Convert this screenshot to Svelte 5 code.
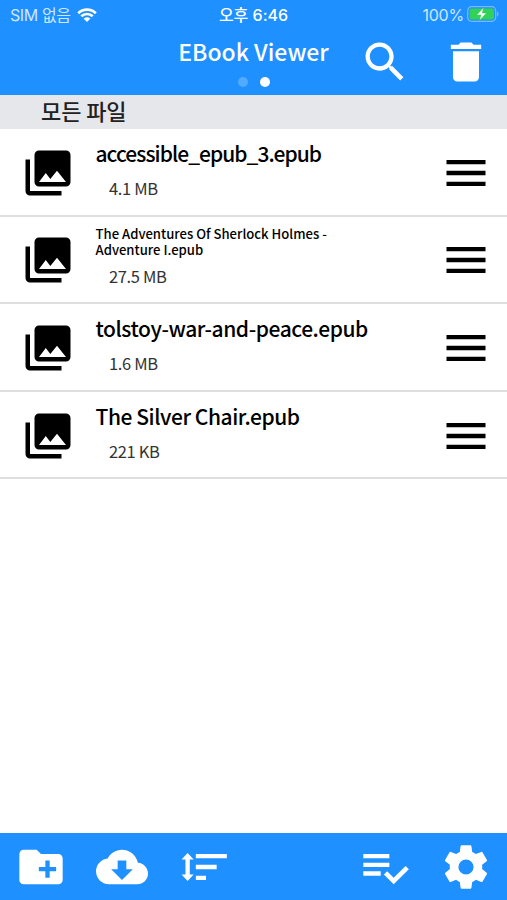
<script>
  // ── Files in the current folder ──
  const files = [
    { name: 'accessible_epub_3.epub', size: '4.1 MB', tight: true },
    { name: 'The Adventures Of Sherlock Holmes - Adventure I.epub', size: '27.5 MB', long: true },
    { name: 'tolstoy-war-and-peace.epub', size: '1.6 MB' },
    { name: 'The Silver Chair.epub', size: '221 KB' },
  ];

  // ── Icon paths, 24x24 grid ──
  const icons = {
    search: 'M15.5 14h-.79l-.28-.27C15.41 12.59 16 11.11 16 9.5 16 5.91 13.09 3 9.5 3S3 5.91 3 9.5 5.91 16 9.5 16c1.61 0 3.09-.59 4.23-1.57l.27.28v.79l5 4.99L20.49 19l-4.99-5zm-6 0C7.01 14 5 11.99 5 9.5S7.01 5 9.5 5 14 7.01 14 9.5 11.99 14 9.5 14z',
    trash: 'M6 19c0 1.1.9 2 2 2h8c1.1 0 2-.9 2-2V7H6v12zM19 4h-3.5l-1-1h-5l-1 1H5v2h14V4z',
    book: 'M22,16V4A2,2 0 0,0 20,2H8A2,2 0 0,0 6,4V16A2,2 0 0,0 8,18H20A2,2 0 0,0 22,16M11,12L13.03,14.71L16,11L20,16H8M2,6V20A2,2 0 0,0 4,22H18V20H4V6',
    menu: 'M3 6h18v2H3zM3 11h18v2H3zM3 16h18v2H3z',
    newFolder: 'M20 6h-8l-2-2H4c-1.11 0-1.99.89-1.99 2L2 18c0 1.11.89 2 2 2h16c1.11 0 2-.89 2-2V8c0-1.11-.89-2-2-2zm-1 8h-3v3h-2v-3h-3v-2h3V9h2v3h3v2z',
    download: 'M19.35 10.04C18.67 6.59 15.64 4 12 4 9.11 4 6.6 5.64 5.35 8.04 2.34 8.36 0 10.91 0 14c0 3.31 2.69 6 6 6h13c2.76 0 5-2.24 5-5 0-2.64-2.05-4.78-4.65-4.96zM17 13l-5 5-5-5h3V9h4v4h3z',
    sort: 'M4.9 5.5L7.7 8.5H5.9V15.5H7.7L4.9 18.5L2.1 15.5H3.9V8.5H2.1zM8.7 6h14.3v2H8.7zM8.7 11h9.6v2H8.7zM8.7 16h4.7v2H8.7z',
    select: 'M14,10H2V12H14V10M14,6H2V8H14V6M2,16H10V14H2V16M21.5,11.5L23,13L16,20L11.5,15.5L13,14L16,17L21.5,11.5Z',
    settings: 'M12,15.5A3.5,3.5 0 0,1 8.5,12A3.5,3.5 0 0,1 12,8.5A3.5,3.5 0 0,1 15.5,12A3.5,3.5 0 0,1 12,15.5M19.43,12.97C19.47,12.65 19.5,12.33 19.5,12C19.5,11.67 19.47,11.34 19.43,11L21.54,9.37C21.73,9.22 21.78,8.95 21.66,8.73L19.66,5.27C19.54,5.05 19.27,4.96 19.05,5.05L16.56,6.05C16.04,5.66 15.5,5.32 14.87,5.07L14.5,2.42C14.46,2.18 14.25,2 14,2H10C9.75,2 9.54,2.18 9.5,2.42L9.13,5.07C8.5,5.32 7.96,5.66 7.44,6.05L4.95,5.05C4.73,4.96 4.46,5.05 4.34,5.27L2.34,8.73C2.21,8.95 2.27,9.22 2.46,9.37L4.57,11C4.53,11.34 4.5,11.67 4.5,12C4.5,12.33 4.53,12.65 4.57,12.97L2.46,14.63C2.27,14.78 2.21,15.05 2.34,15.27L4.34,18.73C4.46,18.95 4.73,19.03 4.95,18.95L7.44,17.94C7.96,18.34 8.5,18.68 9.13,18.93L9.5,21.58C9.54,21.82 9.75,22 10,22H14C14.25,22 14.46,21.82 14.5,21.58L14.87,18.93C15.5,18.67 16.04,18.34 16.56,17.94L19.05,18.95C19.27,19.03 19.54,18.95 19.66,18.73L21.66,15.27C21.78,15.05 21.73,14.78 21.54,14.63L19.43,12.97Z',
  };
</script>

{#snippet icon(name)}
  <svg class="icon" viewBox="0 0 24 24"><path d={icons[name]} /></svg>
{/snippet}

<div class="app">
  <header>
    <div class="status">
      <div class="status-left">
        <span class="carrier">SIM 없음</span>
        <svg class="wifi" viewBox="0 0 20 14">
          <path d="M1.2 5.2A12.6 12.6 0 0 1 18.8 5.2" />
          <path d="M4.3 8.3A8.2 8.2 0 0 1 15.7 8.3" />
          <path class="wifi-dot" d="M10 14L6.7 10.7A4.7 4.7 0 0 1 13.3 10.7z" />
        </svg>
      </div>
      <span class="time">오후 6:46</span>
      <div class="status-right">
        <span class="percent">100%</span>
        <svg class="battery" viewBox="0 0 32 16">
          <rect class="battery-shell" x=".7" y=".7" width="28" height="14.6" rx="4" />
          <rect class="battery-fill" x="2.5" y="2.5" width="24.4" height="11" rx="2" />
          <path class="battery-tip" d="M30 5.5C32 6.3 32 9.7 30 10.5z" />
          <path class="bolt" d="M16.5 1.8L9.8 8.9H14L12.6 14.2L19.4 7.1H15.2z" />
        </svg>
      </div>
    </div>
    <div class="nav">
      <div class="heading">
        <h1>EBook Viewer</h1>
        <div class="dots"><i></i><i class="on"></i></div>
      </div>
      <div class="nav-actions">
        <button aria-label="search">{@render icon('search')}</button>
        <button aria-label="delete">{@render icon('trash')}</button>
      </div>
    </div>
  </header>

  <div class="section">모든 파일</div>

  <ul class="files">
    {#each files as file}
      <li class="row">
        <span class="thumb">{@render icon('book')}</span>
        <div class="info">
          <div class="name" class:long={file.long} class:tight={file.tight}>{file.name}</div>
          <div class="size">{file.size}</div>
        </div>
        <button aria-label="menu">{@render icon('menu')}</button>
      </li>
    {/each}
  </ul>

  <footer>
    <button aria-label="new folder">{@render icon('newFolder')}</button>
    <button aria-label="download">{@render icon('download')}</button>
    <button aria-label="sort">{@render icon('sort')}</button>
    <span class="spacer"></span>
    <button aria-label="select">{@render icon('select')}</button>
    <button aria-label="settings">{@render icon('settings')}</button>
  </footer>
</div>

<style>
  :global(body) { margin: 0; background: #fff; }

  .app {
    height: 900px;
    display: flex;
    flex-direction: column;
    background: #fff;
    color: #000;
    font-family: 'Noto Sans CJK KR', sans-serif;
    overflow: hidden;
  }
  button {
    width: 52px;
    height: 52px;
    padding: 0;
    border: none;
    background: none;
    color: inherit;
    flex-shrink: 0;
  }
  .icon { display: block; width: 100%; height: 100%; fill: currentColor; }

  /* ── Header ── */
  header {
    height: 95px;
    flex-shrink: 0;
    background: #1e90ff;
    color: #fff;
  }
  .status {
    height: 30px;
    display: grid;
    grid-template-columns: 1fr auto 1fr;
    align-items: center;
    padding: 0 8px 0 10px;
    box-sizing: border-box;
    font-family: Inter, 'Noto Sans CJK KR', sans-serif;
    font-size: 16px;
    line-height: 29px;
  }
  .status-left, .status-right { display: flex; align-items: center; }
  .status-right { justify-content: flex-end; gap: 3px; }
  .carrier, .percent { color: #cfe6ff; }
  .carrier { letter-spacing: -0.4px; }
  .percent { letter-spacing: -0.2px; }
  .time { margin-right: 2px; font-weight: 500; }
  .wifi { width: 20px; height: 14px; margin: -1px 0 0 6px; fill: none; stroke: #fff; stroke-width: 2.7; }
  .wifi-dot { fill: #fff; stroke: none; }
  .battery { width: 32px; height: 16px; margin-top: -2px; }
  .battery-shell { fill: none; stroke: #78bcff; stroke-width: 1.2; }
  .battery-fill { fill: #32d158; }
  .battery-tip { fill: #78bcff; }
  .bolt { fill: #fff; stroke: #32d158; stroke-width: 0.4; }

  .nav {
    height: 65px;
    display: grid;
    grid-template-columns: 1fr auto 1fr;
    padding: 0 15px;
  }
  .heading { grid-column: 2; display: flex; flex-direction: column; align-items: center; }
  h1 {
    margin: 5px 0 0;
    font-size: 23px;
    line-height: 32px;
    font-weight: 500;
    white-space: nowrap;
  }
  .dots { display: flex; gap: 12px; margin-top: 10px; }
  .dots i { width: 10px; height: 10px; border-radius: 50%; background: #53abff; }
  .dots .on { background: #fff; }
  .nav-actions { display: flex; justify-content: flex-end; gap: 29px; padding-top: 5.5px; }

  /* ── File list ── */
  .section {
    height: 34px;
    flex-shrink: 0;
    padding-left: 41px;
    background: #e6e7eb;
    color: #222;
    font-size: 22px;
    line-height: 31px;
    font-weight: 500;
    letter-spacing: -0.1px;
  }
  .files { flex: 1; margin: 0; padding: 0; list-style: none; }
  .row {
    height: 87.6px;
    display: flex;
    align-items: center;
    padding: 2px 15px 0 21px;
    border-bottom: 2px solid #dedee0;
    box-sizing: border-box;
  }
  .thumb { width: 54px; height: 54px; flex-shrink: 0; }
  .info { flex: 1; align-self: flex-start; padding-left: 20.5px; }
  .name {
    height: 44px;
    padding-top: 6px;
    box-sizing: border-box;
    font-size: 21px;
    line-height: 32px;
    font-weight: 500;
    letter-spacing: -0.43px;
    white-space: nowrap;
  }
  .name.tight { letter-spacing: -0.95px; }
  .name.long {
    width: 260px;
    padding-top: 7px;
    font-size: 13.1px;
    line-height: 16px;
    letter-spacing: 0;
    white-space: normal;
  }
  .size { padding-left: 13.5px; color: #333; font-size: 16.5px; line-height: 27px; letter-spacing: -0.35px; }

  /* ── Toolbar ── */
  footer {
    height: 67px;
    flex-shrink: 0;
    display: flex;
    align-items: center;
    gap: 29px;
    padding: 0 15px;
    box-sizing: border-box;
    background: #1e90ff;
    color: #fff;
  }
  .spacer { flex: 1; }
</style>
